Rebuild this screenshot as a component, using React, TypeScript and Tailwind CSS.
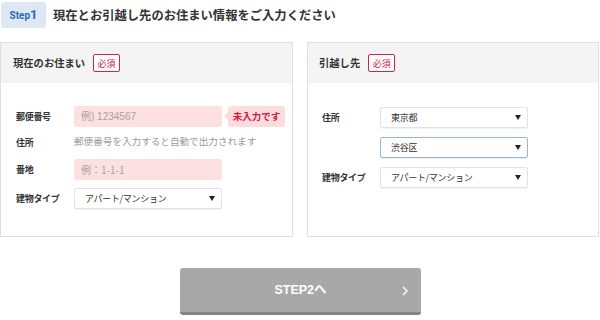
import React from "react";

const JP = { fontFamily: '"Noto Sans CJK JP", "Liberation Sans", sans-serif' };
const LAT = { fontFamily: '"Liberation Sans", "Noto Sans CJK JP", sans-serif' };

function Arrow() {
  return (
    <svg width="6" height="5" viewBox="0 0 6 5" className="shrink-0">
      <path d="M0 0 L6 0 L3 5 Z" fill="#222" />
    </svg>
  );
}

function Select({ text, focused = false }: { text: string; focused?: boolean }) {
  return (
    <div
      className={`w-[148px] h-[21px] flex items-center justify-between pl-[10px] pr-[6px] bg-white rounded-[2px] border ${
        focused ? "border-[#8fb6e6]" : "border-[#e3e3e3]"
      } shadow-[0_1px_1px_rgba(0,0,0,0.06)]`}
    >
      <span className="text-[9px] text-[#333] leading-none tracking-[-0.3px]" style={JP}>
        {text}
      </span>
      <Arrow />
    </div>
  );
}

function Required() {
  return (
    <span
      className="ml-[8px] inline-flex items-center justify-center w-[27px] h-[18px] border-[1.5px] border-[#d4224a] rounded-[2px] text-[#d4224a] text-[9px] leading-none bg-white"
      style={JP}
    >
      必須
    </span>
  );
}

function Label({ children }: { children: React.ReactNode }) {
  return (
    <div className="w-[58px] shrink-0 text-[9px] font-bold text-[#333] leading-none tracking-[-0.3px]" style={JP}>
      {children}
    </div>
  );
}

export default function App() {
  return (
    <div className="w-[600px] h-[320px] bg-white overflow-hidden relative" style={JP}>
      {/* Step header */}
      <div className="flex items-center pt-[2px] pl-[1px]">
        <div className="w-[45px] h-[26px] rounded-[3px] bg-[#dde8f4] flex items-end justify-center pb-[6px]">
          <span
            className="text-[#2b6bb3] font-bold leading-none"
            style={{ fontFamily: '"Liberation Sans Narrow", "Roboto", sans-serif' }}
          >
            <span className="text-[10px]">Step</span>
            <span className="text-[13px]">1</span>
          </span>
        </div>
        <div className="ml-[7px] text-[12.3px] font-bold text-[#333] leading-none" style={JP}>
          現在とお引越し先のお住まい情報をご入力ください
        </div>
      </div>

      {/* Panels */}
      <div className="flex mt-[14px] gap-[14px] pr-[1px]">
        {/* Left panel */}
        <div className="w-[293px] h-[195px] border border-[#e0e0e0] flex flex-col">
          <div className="h-[40px] bg-[#f4f4f4] flex items-center pl-[12px]">
            <span className="text-[10.3px] font-bold text-[#333] leading-none" style={JP}>
              現在のお住まい
            </span>
            <Required />
          </div>
          <div className="pl-[15px] pt-[23px] flex flex-col">
            <div className="flex items-center h-[21px]">
              <Label>郵便番号</Label>
              <div className="w-[148px] h-[21px] bg-[#fde0e0] rounded-[2px] flex items-center pl-[7px]">
                <span className="text-[10px] text-[#a8a0a0] leading-none" style={LAT}>
                  例) 1234567
                </span>
              </div>
              <div className="relative ml-[6px] h-[21px] w-[57px] bg-[#fcdcdc] rounded-[3px] flex items-center justify-center">
                <span className="absolute left-[-4px] top-[6px] w-0 h-0 border-y-[4px] border-y-transparent border-r-[4px] border-r-[#fcdcdc]" />
                <span className="text-[9.5px] font-bold text-[#d0193f] leading-none" style={JP}>
                  未入力です
                </span>
              </div>
            </div>
            <div className="flex items-center h-[16px] mt-[7px]">
              <Label>住所</Label>
              <span className="text-[9.6px] text-[#9a9a9a] leading-none" style={JP}>
                郵便番号を入力すると自動で出力されます
              </span>
            </div>
            <div className="flex items-center h-[21px] mt-[9px]">
              <Label>番地</Label>
              <div className="w-[148px] h-[21px] bg-[#fde0e0] rounded-[2px] flex items-center pl-[7px]">
                <span className="text-[10px] text-[#a8a0a0] leading-none" style={JP}>
                  例：1-1-1
                </span>
              </div>
            </div>
            <div className="flex items-center h-[21px] mt-[8px]">
              <Label>建物タイプ</Label>
              <Select text="アパート/マンション" />
            </div>
          </div>
        </div>

        {/* Right panel */}
        <div className="w-[292px] h-[195px] border border-[#e0e0e0] flex flex-col">
          <div className="h-[40px] bg-[#f4f4f4] flex items-center pl-[11px]">
            <span className="text-[10.3px] font-bold text-[#333] leading-none" style={JP}>
              引越し先
            </span>
            <Required />
          </div>
          <div className="pl-[14px] pt-[24px] flex flex-col">
            <div className="flex items-center h-[21px]">
              <Label>住所</Label>
              <Select text="東京都" />
            </div>
            <div className="flex items-center h-[21px] mt-[9px]">
              <div className="w-[58px] shrink-0" />
              <Select text="渋谷区" focused />
            </div>
            <div className="flex items-center h-[21px] mt-[9px]">
              <Label>建物タイプ</Label>
              <Select text="アパート/マンション" />
            </div>
          </div>
        </div>
      </div>

      {/* Button */}
      <div className="flex justify-center mt-[31px]">
        <div className="ml-[1px] w-[241px] h-[47px] bg-[#a8a8a8] rounded-[3px] border-b-[3px] border-b-[#858585] relative flex items-center justify-center">
          <span className="text-white font-bold text-[12.5px] leading-none" style={LAT}>
            STEP2へ
          </span>
          <svg className="absolute right-[13px] top-[18px]" width="6" height="10" viewBox="0 0 6 10">
            <path d="M1 1 L5 5 L1 9" stroke="white" strokeWidth="1.4" fill="none" />
          </svg>
        </div>
      </div>
    </div>
  );
}
